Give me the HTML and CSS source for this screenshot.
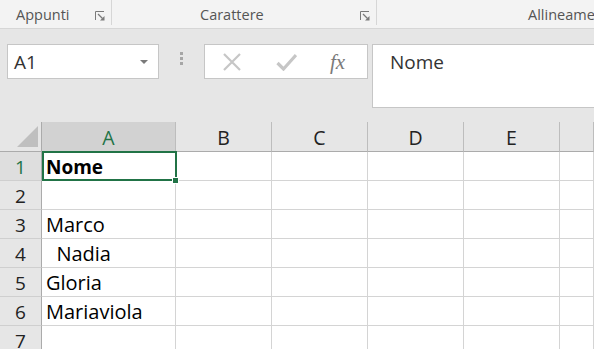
FILE: index.html
```html
<!DOCTYPE html>
<html lang="it">
<head>
<meta charset="utf-8">
<title>Excel</title>
<link rel="stylesheet" href="styles.css">
</head>
<body>
<div class="app">
  <div class="ribbon">
    <div class="group g-clip">
      <span class="glabel">Appunti</span>
      <svg class="launcher" width="10" height="10" viewBox="0 0 10 10"><path d="M0.5 9V0.5H9" fill="none" stroke="#7a7a7a" stroke-width="1"/><path d="M3 3L7.5 7.5" stroke="#7a7a7a" stroke-width="1.3"/><path d="M9.5 5V9.5H5Z" fill="#7a7a7a"/></svg>
    </div>
    <div class="group g-font">
      <span class="glabel">Carattere</span>
      <svg class="launcher" width="10" height="10" viewBox="0 0 10 10"><path d="M0.5 9V0.5H9" fill="none" stroke="#7a7a7a" stroke-width="1"/><path d="M3 3L7.5 7.5" stroke="#7a7a7a" stroke-width="1.3"/><path d="M9.5 5V9.5H5Z" fill="#7a7a7a"/></svg>
    </div>
    <div class="group g-align">
      <span class="glabel">Allineamento</span>
    </div>
  </div>

  <div class="toolbar">
    <div class="namebox">
      <span class="ref">A1</span>
      <svg class="caret" width="8" height="4" viewBox="0 0 8 4"><path d="M0 0H8L4 4Z" fill="#7a7a7a"/></svg>
    </div>
    <div class="grip"><i></i><i></i><i></i></div>
    <div class="fbuttons">
      <svg class="ico" width="20" height="18" viewBox="0 0 20 18"><path d="M2 1L18 17M18 1L2 17" stroke="#c6c6c6" stroke-width="2.2"/></svg>
      <svg class="ico" width="21" height="18" viewBox="0 0 21 18"><path d="M1.5 10L7.5 16L20 2" fill="none" stroke="#c6c6c6" stroke-width="3.2"/></svg>
      <span class="fx">fx</span>
    </div>
    <div class="fbar">Nome</div>
  </div>

  <div class="sheet">
    <div class="corner"><svg width="22" height="22" viewBox="0 0 22 22"><path d="M21 0V21H0Z" fill="#bfbfbf"/></svg></div>
    <div class="ch ch-sel">A</div>
    <div class="ch">B</div>
    <div class="ch">C</div>
    <div class="ch">D</div>
    <div class="ch">E</div>
    <div class="ch"></div>

    <div class="rh rh-sel">1</div>
    <div class="c c-active"><b>Nome</b><span class="sel"></span><span class="handle"></span></div>
    <div class="c"></div><div class="c"></div><div class="c"></div><div class="c"></div><div class="c"></div>

    <div class="rh">2</div>
    <div class="c"></div><div class="c"></div><div class="c"></div><div class="c"></div><div class="c"></div><div class="c"></div>

    <div class="rh">3</div>
    <div class="c">Marco</div><div class="c"></div><div class="c"></div><div class="c"></div><div class="c"></div><div class="c"></div>

    <div class="rh">4</div>
    <div class="c">  Nadia</div><div class="c"></div><div class="c"></div><div class="c"></div><div class="c"></div><div class="c"></div>

    <div class="rh">5</div>
    <div class="c">Gloria</div><div class="c"></div><div class="c"></div><div class="c"></div><div class="c"></div><div class="c"></div>

    <div class="rh">6</div>
    <div class="c">Mariaviola</div><div class="c"></div><div class="c"></div><div class="c"></div><div class="c"></div><div class="c"></div>

    <div class="rh">7</div>
    <div class="c"></div><div class="c"></div><div class="c"></div><div class="c"></div><div class="c"></div><div class="c"></div>
  </div>
</div>
</body>
</html>
```

FILE: styles.css
```css
* { box-sizing: border-box; }
html, body { margin: 0; padding: 0; }
body {
  width: 594px;
  height: 349px;
  overflow: hidden;
  background: #e6e6e6;
  font-family: "Open Sans", "Noto Sans", sans-serif;
}
.app { width: 594px; height: 349px; overflow: hidden; }

.ribbon {
  display: flex;
  height: 29px;
  background: #f3f3f3;
  border-bottom: 1px solid #d6d6d6;
  overflow: hidden;
}
.group {
  position: relative;
  display: flex;
  align-items: center;
  height: 25px;
  padding-top: 5px;
  border-right: 1px solid #d6d6d6;
  flex: none;
}
.glabel {
  font-size: 14.5px;
  color: #555;
  white-space: nowrap;
  line-height: 20px;
}
.launcher { flex: none; margin-top: 2px; }
.g-clip { width: 112px; padding-left: 16px; }
.g-clip .launcher { margin-left: 25px; }
.g-font { width: 265px; padding-left: 88px; }
.g-font .launcher { margin-left: 96px; }
.g-align { border-right: none; padding-left: 151px; }

.toolbar {
  display: flex;
  align-items: flex-start;
  padding: 15px 0 0 7px;
  height: 93px;
  background: #e6e6e6;
}
.namebox {
  width: 152px;
  height: 35px;
  background: #fff;
  border: 1px solid #c6c6c6;
  display: flex;
  align-items: center;
  padding-left: 6px;
  padding-right: 10px;
  flex: none;
}
.ref { font-size: 19px; color: #333; flex: 1; line-height: 30px; }
.caret { flex: none; }
.grip {
  width: 45px;
  height: 35px;
  display: flex;
  flex-direction: column;
  align-items: center;
  padding-top: 8px;
  gap: 2px;
  flex: none;
}
.grip i { display: block; width: 3px; height: 3px; background: #a6a6a6; }
.fbuttons {
  width: 164px;
  height: 35px;
  background: #fff;
  border: 1px solid #c6c6c6;
  display: flex;
  align-items: center;
  padding-left: 17px;
  gap: 35px;
  flex: none;
}
.fbuttons .ico + .ico { margin-left: -1px; margin-right: -1px; }
.fx {
  font-family: "Liberation Serif", "DejaVu Serif", serif;
  font-style: italic;
  font-size: 21px;
  color: #7a7a7a;
  margin-left: -1px;
  line-height: 30px;
}
.fbar {
  flex: 1;
  margin-left: 4px;
  margin-right: -2px;
  height: 64px;
  background: #fff;
  border: 1px solid #c6c6c6;
  font-size: 19px;
  color: #333;
  padding: 4px 0 0 17px;
  line-height: 26px;
}

.sheet {
  display: grid;
  grid-template-columns: 42px 134px 96px 96px 96px 96px 34px;
  grid-template-rows: 30px;
  grid-auto-rows: 29px;
  background: #fff;
  width: 594px;
  font-size: 19px;
}
.corner {
  background: #e6e6e6;
  border-bottom: 1px solid #ababab;
  border-right: 1px solid #ababab;
  display: flex;
  align-items: flex-end;
  justify-content: flex-end;
  padding: 0 2px 3px 0;
}
.corner svg { display: block; }
.ch {
  background: #e6e6e6;
  border-right: 1px solid #bdbdbd;
  border-bottom: 1px solid #ababab;
  text-align: center;
  line-height: 26px;
  padding-top: 3px;
  color: #222;
  font-size: 19.5px;
}
.ch-sel { background: #d2d2d2; color: #217346; }
.rh {
  background: #e6e6e6;
  border-right: 1px solid #ababab;
  border-bottom: 1px solid #cfcfcf;
  text-align: center;
  line-height: 26px;
  padding-top: 2px;
  color: #222;
}
.rh-sel { background: #dedede; color: #217346; }
.c {
  border-right: 1px solid #d4d4d4;
  border-bottom: 1px solid #d4d4d4;
  line-height: 26px;
  padding: 2px 0 0 4px;
  color: #000;
  white-space: pre;
  overflow: visible;
  font-size: 20px;
}
.c-active { position: relative; }
.c-active b { font-weight: 700; font-size: 19px; }
.sel {
  position: absolute;
  left: 0;
  top: -1px;
  right: -2px;
  bottom: -1px;
  border: 2px solid #217346;
}
.handle {
  position: absolute;
  width: 7px;
  height: 7px;
  right: -4px;
  bottom: -4px;
  background: #217346;
  border: 1px solid #fff;
}
```
